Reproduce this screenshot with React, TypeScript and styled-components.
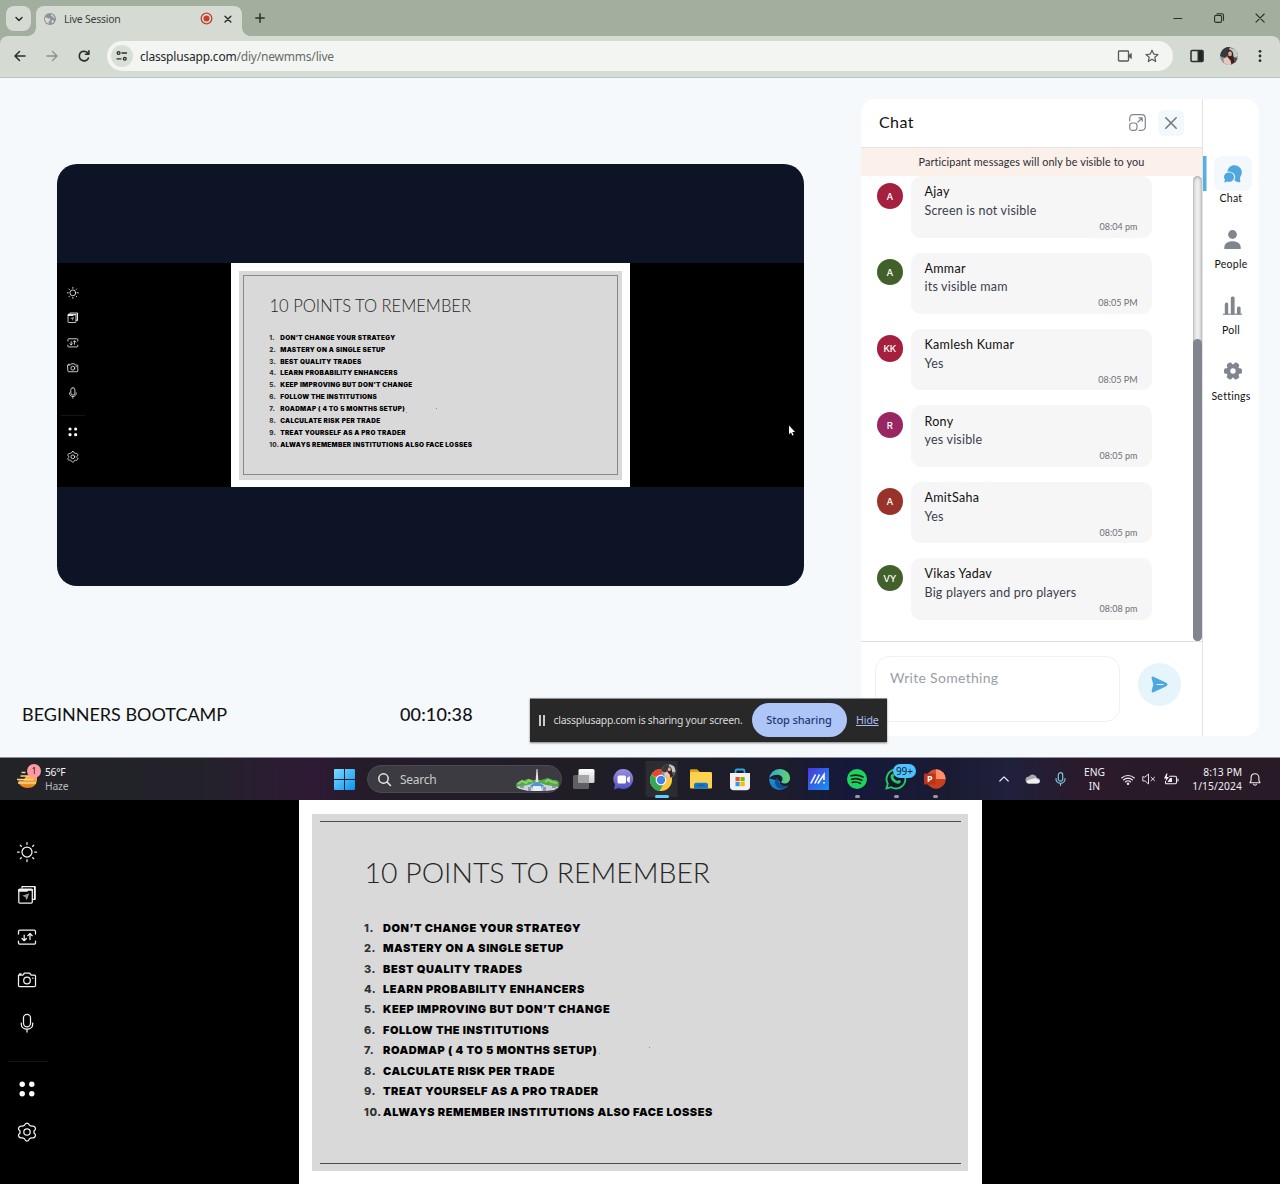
import React from 'react';
import styled, { createGlobalStyle, css } from 'styled-components';

const SYS = '"Noto Sans", "Open Sans", sans-serif';
const UI = 'Lato, "Noto Sans", sans-serif';

const Global = createGlobalStyle`
  * { box-sizing: border-box; }
  body { margin: 0; background: #f5f9fc; }
  svg { display: block; flex: none; overflow: visible; }
`;

const Page = styled.div`
  width: 1280px;
  height: 1184px;
  overflow: hidden;
  display: flex;
  flex-direction: column;
  position: relative;
  font-family: ${UI};
`;

/* A single line of text with its own size, colour and tracking. */
const Text = styled.span<{ $size: number; $color?: string; $track?: number; $weight?: number; $lh?: number; $sys?: boolean }>`
  display: block;
  white-space: pre;
  font-family: ${(p) => (p.$sys ? SYS : UI)};
  font-size: ${(p) => p.$size}px;
  line-height: ${(p) => p.$lh ?? 16}px;
  color: ${(p) => p.$color ?? '#111'};
  letter-spacing: ${(p) => p.$track ?? 0}px;
  font-weight: ${(p) => p.$weight ?? 400};
`;

/* ---------- browser chrome ---------- */

const TabStrip = styled.div`
  height: 36px;
  background: #a2ae9e;
  display: flex;
  align-items: flex-start;
  padding: 6px 0 0 6px;
`;
const TabSearch = styled.div`
  width: 25px;
  height: 25px;
  border-radius: 8px;
  background: #d5dbd2;
  display: flex;
  align-items: center;
  justify-content: center;
`;
const Tab = styled.div`
  position: relative;
  margin-left: 5px;
  width: 206px;
  height: 30px;
  border-radius: 8px 8px 0 0;
  background: #d5dbd2;
  display: flex;
  align-items: center;
  padding: 0 8px 5px 8px;
  &::before, &::after {
    content: '';
    position: absolute;
    bottom: 0;
    width: 8px;
    height: 8px;
  }
  &::before { left: -8px; background: radial-gradient(circle at 0 0, transparent 7.5px, #d5dbd2 8px); }
  &::after { right: -8px; background: radial-gradient(circle at 100% 0, transparent 7.5px, #d5dbd2 8px); }
`;
const TabTitle = styled.div` margin-left: 8px; flex: 1; `;
const TabTools = styled.div` display: flex; align-items: center; gap: 9px; `;
const NewTab = styled.div` margin: 7px 0 0 12.5px; `;
const WindowButtons = styled.div`
  margin-left: auto;
  margin-right: 15px;
  padding-top: 7px;
  display: flex;
  gap: 31px;
`;
const ToolbarBack = styled.div` background: #a2ae9e; `;
const Toolbar = styled.div`
  height: 42px;
  background: #d5dbd2;
  border-radius: 8px 8px 0 0;
  border-bottom: 1px solid #bcc5c5;
  display: flex;
  align-items: center;
  padding: 0 13px 1px 13px;
`;
const NavIcons = styled.div` display: flex; gap: 18px; width: 94px; `;
const AddressBar = styled.div`
  width: 1066px;
  height: 30px;
  border-radius: 15px;
  background: #f3f5f2;
  display: flex;
  align-items: center;
  padding: 0 14px 0 4px;
`;
const SiteInfo = styled.div`
  width: 22px;
  height: 22px;
  border-radius: 50%;
  background: #d9ded6;
  display: flex;
  align-items: center;
  justify-content: center;
  margin-right: 7px;
`;
const Url = styled.div`
  flex: 1;
  padding-top: 2px;
  font: 12px/16px ${SYS};
  letter-spacing: -0.2px;
  color: #23282a;
  span { color: #666c6a; }
`;
const AddressIcons = styled.div` display: flex; gap: 12.5px; align-items: center; `;
const ToolbarRight = styled.div` display: flex; align-items: center; margin-left: 16.5px; gap: 16.3px; `;

/* ---------- meeting page ---------- */

const Meeting = styled.main`
  height: 679px;
  background: #f5f9fc;
  display: flex;
  justify-content: space-between;
  padding: 21px 21px 0 0;
`;
const Stage = styled.section`
  width: 861px;
  padding: 65px 0 0 57px;
`;
const Video = styled.div`
  width: 747px;
  height: 422px;
  border-radius: 20px;
  overflow: hidden;
  background: #0c1426;
  padding-top: 99px;
`;
const Share = styled.div`
  height: 224px;
  background: #000;
  overflow: hidden;
  > div { margin-left: -0.3px; }
`;
const StageFooter = styled.div`
  display: flex;
  margin: 116px 0 0 -35px;
`;
const FooterName = styled.div` width: 378px; `;

const Panel = styled.aside`
  width: 398px;
  height: 637px;
  border-radius: 14px;
  background: #fff;
  display: flex;
`;
const ChatColumn = styled.div`
  width: 342px;
  border-right: 1px solid #dfe3e7;
  display: flex;
  flex-direction: column;
`;
const ChatHeader = styled.div`
  height: 49px;
  border-bottom: 1px solid #e3e5e7;
  display: flex;
  align-items: center;
  padding: 0 18px;
`;
const ChatTitle = styled.div` flex: 1; padding-bottom: 2px; `;
const PopOut = styled.div` padding: 0 0 2px; `;
const CloseButton = styled.div`
  width: 26px;
  height: 26px;
  margin-left: 12px;
  border-radius: 6px;
  background: #f3f8fc;
  display: flex;
  align-items: center;
  justify-content: center;
`;
const Banner = styled.div`
  height: 28px;
  background: #fbf0ea;
  display: flex;
  align-items: center;
  justify-content: center;
`;
const Scroller = styled.div`
  height: 465px;
  display: flex;
  justify-content: space-between;
  overflow: hidden;
`;
const Messages = styled.div`
  padding: 0.3px 0 0 15.5px;
  display: flex;
  flex-direction: column;
  gap: 15px;
`;
const Message = styled.div` display: flex; gap: 7.5px; `;
const Avatar = styled.div<{ $bg: string }>`
  width: 26.5px;
  height: 26.5px;
  margin-top: 6.3px;
  border-radius: 50%;
  background: ${(p) => p.$bg};
  color: #fff;
  font: 500 9.5px/27px Inter, sans-serif;
  letter-spacing: -0.2px;
  text-align: center;
`;
const Bubble = styled.div`
  width: 241px;
  height: 61.4px;
  border-radius: 10px;
  background: #f6f6f6;
  padding: 7.2px 14px 0;
`;
const Stamp = styled.div` display: flex; justify-content: flex-end; margin-top: -0.5px; `;
const Track = styled.div`
  width: 9px;
  height: 465px;
  border-radius: 5px;
  background: #f1f1f1;
  box-shadow: inset 0 0 4px rgba(0, 0, 0, 0.45);
  padding-top: 163px;
`;
const Thumb = styled.div` height: 302px; border-radius: 5px; background: #80858f; `;
const Composer = styled.div`
  flex: 1;
  border-top: 1px solid #d9e1e7;
  display: flex;
  padding: 14px 0 0 14px;
`;
const Input = styled.div`
  width: 245px;
  height: 66px;
  border: 1px solid #f0f1f3;
  border-radius: 14px;
  padding: 13px 14px;
`;
const Send = styled.div`
  width: 43px;
  height: 43px;
  margin: 7px 0 0 18px;
  border-radius: 50%;
  background: #e6f4fb;
  display: flex;
  align-items: center;
  justify-content: center;
`;

const SideNav = styled.nav`
  width: 56px;
  padding-top: 57px;
  display: flex;
  flex-direction: column;
`;
const NavItem = styled.div<{ $active?: boolean }>`
  height: 65.8px;
  display: flex;
  flex-direction: column;
  ${(p) => p.$active && css`
    background: linear-gradient(#57aee2, #57aee2) 0 0 / 3.5px 35px no-repeat;
  `}
`;
const NavIcon = styled.div<{ $active?: boolean }>`
  width: 37.5px;
  height: 35px;
  margin-left: 11px;
  border-radius: 8px;
  background: ${(p) => (p.$active ? '#f2f8fd' : 'transparent')};
  display: flex;
  align-items: center;
  justify-content: center;
`;
const NavLabel = styled.div` display: flex; justify-content: center; margin-top: -0.6px; `;

/* ---------- shared presentation ---------- */

const u = (n: number, k: number) => `${(n * k).toFixed(2)}px`;

const BoardRoot = styled.div<{ $k: number }>`
  width: ${(p) => u(1280, p.$k)};
  height: ${(p) => u(384, p.$k)};
  background: #000;
  display: flex;
`;
const Rail = styled.div<{ $k: number }>`
  width: ${(p) => u(299, p.$k)};
  padding-top: ${(p) => u(30.6, p.$k)};
`;
const RailCell = styled.div<{ $k: number }>`
  width: ${(p) => u(54, p.$k)};
  height: ${(p) => u(42.7, p.$k)};
  display: flex;
  align-items: center;
  justify-content: center;
`;
const RailRule = styled.div<{ $k: number }>`
  width: ${(p) => u(40, p.$k)};
  height: 1px;
  margin: ${(p) => `${u(16.6, p.$k)} 0 ${u(6.4, p.$k)} ${u(8, p.$k)}`};
  background: #141414;
`;
const Paper = styled.div<{ $k: number }>`
  width: ${(p) => u(683, p.$k)};
  background: #fff;
  padding: ${(p) => `${u(14, p.$k)} ${u(14, p.$k)} ${u(13, p.$k)} ${u(13, p.$k)}`};
`;
const Sheet = styled.div<{ $k: number }>`
  height: 100%;
  background: #d9d9d9;
  padding: ${(p) => `${u(7, p.$k)} ${u(7, p.$k)} ${u(7, p.$k)} ${u(8, p.$k)}`};
`;
const Frame = styled.div<{ $k: number; $boxed?: boolean }>`
  height: 100%;
  border: solid ${(p) => (p.$boxed ? '#8a8a8a' : '#4c4c4c')};
  border-width: ${(p) => (p.$boxed ? '1px' : '1px 0')};
  padding: ${(p) => `${u(31.3, p.$k)} 0 0 ${u(p.$boxed ? 42.3 : 44, p.$k)}`};
`;
const SlideTitle = styled.div<{ $k: number }>`
  padding-left: ${(p) => u(0.6, p.$k)};
  font-family: Lato, sans-serif;
  font-weight: 300;
  font-size: ${(p) => u(28.4, p.$k)};
  line-height: ${(p) => u(38, p.$k)};
  color: #262626;
  white-space: pre;
`;
const Points = styled.div<{ $k: number }>` padding-top: ${(p) => u(p.$k < 1 ? 27.4 : 26.4, p.$k)}; `;
const Point = styled.div<{ $k: number }>`
  height: ${(p) => u(20.45, p.$k)};
  display: flex;
  font-family: Inter, sans-serif;
  font-weight: 900;
  font-size: ${(p) => u(11, p.$k)};
  line-height: ${(p) => u(20.45, p.$k)};
  letter-spacing: ${(p) => u(0.53, p.$k)};
  color: #000;
  white-space: pre;
`;
const PointNo = styled.span<{ $k: number }>`
  width: ${(p) => u(19, p.$k)};
  font-weight: 800;
  color: #303030;
`;
const Speck = styled.i<{ $k: number; $gap: number; $drop: number }>`
  width: 1px;
  height: 1px;
  margin: ${(p) => `${u(p.$drop, p.$k)} 0 0 ${u(p.$gap, p.$k)}`};
  background: #a08888;
`;

/* ---------- taskbar ---------- */

const Taskbar = styled.div`
  height: 43px;
  border-top: 1px solid #8d8f9c;
  background: linear-gradient(90deg, #222327 0, #23222b 200px, #2e1a35 310px, #241c29 370px, #1f1d26 600px, #1d1d2c 780px, #15183b 850px, #1a1b33 950px, #20203c 1010px, #2a1a2b 1080px, #281a26 1280px);
  display: flex;
  align-items: center;
`;
const Weather = styled.div` width: 334px; padding-left: 17px; display: flex; gap: 5px; align-items: center; `;
const WeatherIcon = styled.div` position: relative; width: 23px; height: 28px; padding-top: 3px; `;
const Badge = styled.div`
  position: absolute;
  left: 10px;
  top: -1px;
  width: 14px;
  height: 14px;
  border-radius: 50%;
  background: #ff99a4;
  color: #222;
  font: 9px/14px ${SYS};
  text-align: center;
`;
const SearchBox = styled.div`
  width: 195px;
  height: 28px;
  margin: 0 2.5px 0 12px;
  border-radius: 14px;
  border: 1px solid #4b4a51;
  background: #3c3b42;
  display: flex;
  align-items: center;
  gap: 9px;
  padding-left: 10px;
`;
const SearchLabel = styled.div` flex: 1; padding-top: 1px; `;
const Apps = styled.div` display: flex; `;
const AppCell = styled.div<{ $mark?: string; $wide?: boolean; $hot?: boolean }>`
  position: relative;
  width: 39.05px;
  height: 36px;
  display: flex;
  align-items: center;
  justify-content: center;
  ${(p) => p.$hot && css`
    border-radius: 5px;
    background: linear-gradient(90deg, transparent 2px, #2c2c33 3px, #2c2c33 34px, transparent 35px);
  `}
  &::after {
    content: '';
    position: absolute;
    bottom: -1px;
    width: ${(p) => (p.$wide ? 14 : 5)}px;
    height: 3px;
    border-radius: 2px;
    background: ${(p) => p.$mark ?? 'transparent'};
  }
`;
const CountBadge = styled.div`
  position: absolute;
  left: 16px;
  top: 3px;
  width: 23px;
  height: 14px;
  border-radius: 7px;
  background: #4cc2ff;
  color: #10222e;
  font: 10px/14px ${SYS};
  letter-spacing: -0.2px;
  text-align: center;
`;
const Tray = styled.div` margin-left: auto; display: flex; align-items: center; padding-right: 12px; `;
const TrayItem = styled.div<{ $w: number; $end?: boolean }>`
  width: ${(p) => p.$w}px;
  display: flex;
  flex-direction: column;
  align-items: ${(p) => (p.$end ? 'flex-end' : 'center')};
`;

/* ---------- overlays ---------- */

const ShareBar = styled.div`
  position: absolute;
  left: 530px;
  top: 698px;
  width: 357px;
  height: 44px;
  background: #282828;
  border-top: 1px solid #8d8f91;
  box-shadow: 0 1px 2px rgba(0, 0, 0, 0.5);
  display: flex;
  align-items: center;
  padding: 0 0 1px 9px;
`;
const ShareText = styled.div` width: 198.5px; margin-left: 8.5px; `;
const StopButton = styled.div`
  width: 95px;
  height: 34px;
  border-radius: 17px;
  background: #aec5f8;
  display: flex;
  align-items: center;
  justify-content: center;
  padding-right: 1px;
  margin-right: 9px;
`;
const HideLink = styled.span`
  font: 10.6px/14px ${SYS};
  letter-spacing: -0.1px;
  color: #a9bdf0;
  text-decoration: underline;
`;
const Pointer = styled.svg` position: absolute; left: 788px; top: 425px; `;

/* ---------- drawings ---------- */

type IconProps = { s?: number; c?: string; w?: number; children: React.ReactNode; box?: string; h?: number; fill?: string };
const Svg = ({ s = 16, h, c = '#2b2f2c', w = 1.5, box, fill = 'none', children }: IconProps) => (
  <svg width={s} height={h ?? s} viewBox={box ?? `0 0 ${s} ${h ?? s}`} fill={fill} stroke={c} strokeWidth={w} strokeLinecap="round" strokeLinejoin="round">{children}</svg>
);

function RailIcon({ name, k }: { name: string; k: number }) {
  const size = 20 * k;
  const w = k < 1 ? 1.4 : 1.25;
  return (
    <Svg s={size} box="0 0 20 20" c="#f2f2f2" w={w}>
      {name === 'sun' && <><circle cx="10" cy="10" r="5" /><path d="M10 .5v1.800M10 17.700v1.800M.5 10h1.800M17.700 10h1.800M3.300 3.300l1 1M15.700 15.700l1 1M3.300 16.700l1-1M15.700 4.300l1-1" /></>}
      {name === 'pages' && <><path d="M5 3V1.700h12.800v12.600h-2" /><rect x="1.800" y="4" width="13.500" height="14" rx="1" /><path d="M2 4.800h13.200M2 5.800h8" strokeWidth="1.800" /><path d="M12.300 8.300l-2.500 7-1.500-3.200-3.100-1.300z" fill="#999" stroke="none" /><path d="M17.800 2v12" strokeWidth="1.800" /></>}
      {name === 'swap' && <><path d="M1.500 7V4.500c0-1 .5-1.500 1.500-1.500h14c1 0 1.500.5 1.500 1.500V7M1.500 14v2c0 .700.300 1 1 1h15c.700 0 1-.300 1-1v-2" /><path d="M7.200 8v5.500M5 11.500l2.200 2.200 2.200-2.200M13 12.500V6.800M10.800 8.700L13 6.500l2.200 2.200" /></>}
      {name === 'camera' && <><path d="M1.500 5.200h4.300L7.500 3h5l1.700 2.200h3.300c.7 0 1 .4 1 1v9.300c0 .8-.4 1.200-1.200 1.200H2.700c-.8 0-1.200-.4-1.200-1.200zM2.500 3.800h1.500" /><circle cx="10" cy="10.500" r="3.300" /><path d="M15.500 8h.5" /></>}
      {name === 'mic' && <><rect x="6.500" y="1.300" width="7" height="12.500" rx="3.500" /><path d="M4.300 10v1.200c0 3 2.600 5 5.700 5s5.700-2 5.700-5V10M10 16.400v2.700" /></>}
      {name === 'dots' && <g fill="#fff" stroke="none"><circle cx="5.200" cy="5.200" r="2.700" /><circle cx="14.800" cy="5.200" r="2.700" /><circle cx="5.200" cy="14.800" r="2.700" /><circle cx="14.800" cy="14.800" r="2.700" /></g>}
      {name === 'gear' && <><path d="M10 1c1.300 0 2 .5 2.500 2.300 1.300.9 1.700 1.100 3 .8 1.700-.3 2.600.9 3 2.200.4 1.300-.9 2-1.500 2.700v2c.6.700 1.900 1.400 1.500 2.700-.4 1.300-1.300 2.500-3 2.200-1.300-.3-1.700-.1-3 .8C12 18.500 11.300 19 10 19s-2-.5-2.500-2.300c-1.300-.9-1.700-1.100-3-.8-1.700.3-2.600-.9-3-2.200C1.100 12.400 2.400 11.700 3 11V9c-.6-.7-1.900-1.400-1.500-2.700.4-1.300 1.300-2.500 3-2.200 1.300.3 1.700.1 3-.8C8 1.500 8.700 1 10 1z" /><circle cx="10" cy="10" r="3.200" /></>}
    </Svg>
  );
}

const POINTS = [
  'DON’T CHANGE YOUR STRATEGY',
  'MASTERY ON A SINGLE SETUP',
  'BEST QUALITY TRADES',
  'LEARN PROBABILITY ENHANCERS',
  'KEEP IMPROVING BUT DON’T CHANGE',
  'FOLLOW THE INSTITUTIONS',
  'ROADMAP ( 4 TO 5 MONTHS SETUP)',
  'CALCULATE RISK PER TRADE',
  'TREAT YOURSELF AS A PRO TRADER',
  'ALWAYS REMEMBER INSTITUTIONS ALSO FACE LOSSES',
];
const MARKED = 6;

function Board({ k, boxed }: { k: number; boxed?: boolean }) {
  return (
    <BoardRoot $k={k}>
      <Rail $k={k}>
        {['sun', 'pages', 'swap', 'camera', 'mic'].map((n) => <RailCell $k={k} key={n}><RailIcon name={n} k={k} /></RailCell>)}
        <RailRule $k={k} />
        {['dots', 'gear'].map((n) => <RailCell $k={k} key={n}><RailIcon name={n} k={k} /></RailCell>)}
      </Rail>
      <Paper $k={k}>
        <Sheet $k={k}>
          <Frame $k={k} $boxed={boxed}>
            <SlideTitle $k={k}>10 POINTS TO REMEMBER</SlideTitle>
            <Points $k={k}>
              {POINTS.map((t, i) => (
                <Point $k={k} key={t}>
                  <PointNo $k={k}>{i + 1}.</PointNo>{t}
                  {i === MARKED && <><Speck $k={k} $gap={2} $drop={13} /><Speck $k={k} $gap={49} $drop={7} /></>}
                </Point>
              ))}
            </Points>
          </Frame>
        </Sheet>
      </Paper>
    </BoardRoot>
  );
}

const CHAT = [
  { name: 'Ajay', text: 'Screen is not visible', time: '08:04 pm', tag: 'A', bg: '#a5203f' },
  { name: 'Ammar', text: 'its visible mam', time: '08:05 PM', tag: 'A', bg: '#42602a' },
  { name: 'Kamlesh Kumar', text: 'Yes', time: '08:05 PM', tag: 'KK', bg: '#a5203f' },
  { name: 'Rony', text: 'yes visible', time: '08:05 pm', tag: 'R', bg: '#992663' },
  { name: 'AmitSaha', text: 'Yes', time: '08:05 pm', tag: 'A', bg: '#97332a' },
  { name: 'Vikas Yadav', text: 'Big players and pro players', time: '08:08 pm', tag: 'VY', bg: '#42602a' },
];

const G = '#80858f';
const TEETH = [0, 60, 120, 180, 240, 300];
const NAV = [
  { label: 'Chat', icon: <svg width="18" height="18" viewBox="0 0 18 18" fill="#4ea7df"><path d="M10.200.3c4.200 0 7.600 3 7.600 6.900 0 2.100-.8 3.800-1.800 5.200l.3 4.300c0 .5-.3.700-.7.600-2.500-.3-4.300-1-5.300-2.100.6-.9.9-1.900.9-3 0-3.300-2.900-5.700-7.900-5.600C4 3 6.800.3 10.200.3z" /><path d="M5 7.500c2.800 0 5 2 5 4.700s-2.200 4.700-5 4.700c-.6 0-1.200-.1-1.700-.3L.8 17.400c-.3.100-.5-.1-.4-.4l.5-2.400C.4 13.900 0 13.100 0 12.200 0 9.500 2.200 7.500 5 7.500z" /></svg> },
  { label: 'People', icon: <svg width="17" height="19" viewBox="0 0 17 19" fill={G}><circle cx="8.500" cy="4.500" r="4.400" /><path d="M.3 19v-1.500C.3 13.500 4 11.300 8.500 11.300s8.200 2.200 8.200 6.200V19z" /></svg> },
  { label: 'Poll', icon: <svg width="19" height="19" viewBox="0 0 19 19" fill={G}><path d="M0 17.600h19v1.200H0z" /><rect x="1.800" y="6.500" width="3.400" height="12" rx="1.500" /><rect x="7.800" y=".5" width="3.800" height="18" rx="1.500" /><rect x="14" y="10.500" width="3.600" height="8" rx="1.500" /></svg> },
  { label: 'Settings', icon: <svg width="18" height="18" viewBox="0 0 18 18" fill={G}><circle cx="9" cy="9" r="6.700" />{TEETH.map((a) => <rect key={a} x="6.200" y="0" width="5.600" height="5" rx="1.900" transform={`rotate(${a + 30} 9 9)`} />)}<circle cx="9" cy="9" r="2.700" fill="#fff" /></svg> },
];

const PhotoHead = ({ s }: { s: number }) => (
  <svg width={s} height={s} viewBox="0 0 18 18">
    <circle cx="9" cy="9" r="9" fill="#8f9795" />
    <path d="M1 5.500A9 9 0 0110 0v6L5 11 0 9z" fill="#343a3a" />
    <path d="M9 1l7 2 2 6-5 2z" fill="#c5cbca" />
    <path d="M8 3.500c3-1.500 5.500 1 5.300 5L15 15l-4 2.700-4-3z" fill="#3b211e" />
    <ellipse cx="10" cy="6.800" rx="1.900" ry="2.500" fill="#e0aa96" />
    <path d="M3.500 11.500l4-1.500 3 3.500 1 4.300-3 .2-4.500-2z" fill="#e8c4bd" />
    <path d="M14 10l3.500 1.500L15 16z" fill="#554b4b" />
  </svg>
);

const APPS: { id: string; mark?: string; wide?: boolean; hot?: boolean; art: React.ReactNode }[] = [
  { id: 'tasks', art: <svg width="22" height="20" viewBox="0 0 22 20"><defs><linearGradient id="tw" x2="0" y2="1"><stop stopColor="#fff" /><stop offset="1" stopColor="#cfcfcf" /></linearGradient></defs><rect x="0" y="6" width="16" height="14" rx="1.500" fill="#5f5f63" /><rect x="5.500" y="0" width="16" height="14" rx="1.500" fill="url(#tw)" /><rect x="5.500" y="6" width="10.500" height="8" fill="#a6a6a8" /></svg> },
  { id: 'chat', art: <svg width="21" height="21" viewBox="0 0 21 21"><defs><linearGradient id="tc" x2="0" y2="1"><stop stopColor="#9a91dc" /><stop offset="1" stopColor="#4f50c4" /></linearGradient></defs><path d="M10.500 0a10 10 0 11-4.600 19L1 20.500l1-5A10 10 0 0110.500 0z" fill="url(#tc)" /><rect x="4.500" y="6.500" width="8.500" height="8" rx="1.500" fill="#fff" /><path d="M14 9l2.800-2v7L14 12z" fill="#fff" /></svg> },
  { id: 'chrome', mark: '#60cdff', wide: true, hot: true, art: <svg width="28" height="28" viewBox="0 0 28 28"><circle cx="13" cy="15" r="11" fill="#fcc934" /><path d="M13 15L3.500 9.500a11 11 0 0119 0z" fill="#ea4335" /><path d="M3.500 9.500a11 11 0 007.900 16.400L17 17l-6 1z" fill="#34a853" /><path d="M3.500 9.500L8.500 17.500h5z" fill="#34a853" /><circle cx="13" cy="15" r="5.400" fill="#fff" /><circle cx="13" cy="15" r="4.200" fill="#3f83ec" /><g transform="translate(13.500 -1)"><PhotoHead s={14} /></g></svg> },
  { id: 'files', art: <svg width="22" height="20" viewBox="0 0 22 20"><path d="M0 1.500C0 .7.500.3 1.300.3H7l2.500 2.200V5H0z" fill="#e0a01c" /><path d="M0 4.500c0-1 .5-1.500 1.500-1.500h19c1 0 1.500.5 1.500 1.500V18c0 1-.5 1.500-1.500 1.500h-19C.5 19.500 0 19 0 18z" fill="#ffd150" /><path d="M4 16c0-1.500.8-2.300 2.200-2.300h9.600c1.400 0 2.200.8 2.200 2.300v3.500H4z" fill="#1779c4" /><path d="M7.500 16.300h7" stroke="#0e5b9c" /></svg> },
  { id: 'store', art: <svg width="22" height="23" viewBox="0 0 22 23"><path d="M6.500 5V3c0-1 .5-1.500 1.500-1.500h6c1 0 1.500.5 1.500 1.500v2" stroke="#2fa8e6" strokeWidth="1.800" fill="none" /><path d="M1 5h20v13.500c0 2.500-1.200 3.800-3.800 3.800H4.800C2.200 22.300 1 21 1 18.500z" fill="#f1f1f3" /><path fill="#f25022" d="M6.500 9h4.200v4.200H6.500z" /><path fill="#7fba00" d="M11.500 9h4.200v4.200h-4.200z" /><path fill="#2a9fe5" d="M6.500 14h4.200v4.200H6.500z" /><path fill="#ffb900" d="M11.500 14h4.200v4.200h-4.200z" /></svg> },
  { id: 'edge', art: <svg width="21" height="21" viewBox="0 0 21 21"><defs><linearGradient id="eg"><stop stopColor="#2aa9d8" /><stop offset="1" stopColor="#62d46c" /></linearGradient><linearGradient id="eb" x2="1" y2="1"><stop stopColor="#1d94dc" /><stop offset="1" stopColor="#1766b4" /></linearGradient></defs><path d="M.2 9.500C0 16 4.500 20.900 10.500 20.900c4 0 7-1.800 8.800-4.300-2.500 1-6 .6-7.800-1.300-.9-1-1-2.200-.7-3.300z" fill="url(#eb)" /><path d="M.2 9.500A10.400 10.400 0 0110.500.1C16.500.1 21 4.500 21 9c0 4-2.800 5.600-5.600 5.600-2 0-3.200-.8-3.200-1.500 0-.8 1.300-1 1.300-3 0-2.400-2-4.300-5.200-4.300C4.800 5.800 1.500 7.200.2 9.500z" fill="url(#eg)" /><path d="M8.500 8.500c-2 1.200-3 3.700-2.200 6.500 1 3.300 4 5 7 4.600 2.500-.4 4.800-1.700 6-3-2.500 1-6 .6-8.300-1.300-1.600-1.400-2-4-2.500-6.800z" fill="#0f4d92" /></svg> },
  { id: 'myasus', art: <svg width="21" height="22" viewBox="0 0 21 22"><defs><linearGradient id="ma" x2="1" y2="1"><stop stopColor="#4d35dd" /><stop offset="1" stopColor="#1593f5" /></linearGradient></defs><rect width="21" height="22" fill="url(#ma)" /><path d="M2.800 15.500L7.500 6.500M6.800 15.500l4.700-9M9.800 15.500l6.200-9v5.500M16 14v1.500" stroke="#fff" strokeWidth="1.600" fill="none" /></svg> },
  { id: 'spotify', mark: '#9a9aa3', art: <svg width="20" height="20" viewBox="0 0 20 20"><circle cx="10" cy="10" r="10" fill="#1fd15f" /><path d="M4 6.800c4.500-1.200 8.500-.8 12 1.200M4.700 10.200c3.800-1 7-.6 10 1.100M5.300 13.400c3-.8 5.700-.4 8.200 1" stroke="#12271a" strokeWidth="1.700" fill="none" strokeLinecap="round" /></svg> },
  { id: 'whatsapp', mark: '#9a9aa3', art: <><svg width="22" height="22" viewBox="0 0 22 22"><path d="M1.500 20.500l1.300-4.800a9.400 9.400 0 113.500 3.500z" fill="#15182c" stroke="#27c768" strokeWidth="1.900" /><path d="M7.500 5.800c.8-.3 1 .2 1.600 1.800.3.800-1 1.300-.6 2 .9 1.500 2 2.600 3.700 3.300.7.300 1.100-1.200 1.800-.9 1.700.8 2 .9 1.800 1.700-.4 1.700-2.300 2.300-4 1.800-3.200-1-5.600-3.300-6.200-6-.3-1.700.7-3.300 1.900-3.700z" fill="#27c768" /></svg><CountBadge>99+</CountBadge></> },
  { id: 'powerpoint', mark: '#9a9aa3', art: <svg width="22" height="20" viewBox="0 0 22 20"><circle cx="12" cy="10" r="9.700" fill="#d35230" /><path d="M12 .3V10h9.700A9.700 9.700 0 0012 .3z" fill="#ff8f6b" /><path d="M2.300 10h19.400A9.700 9.700 0 0112 19.700 9.700 9.700 0 012.300 10z" fill="#c13b1b" opacity=".75" /><rect x="0" y="4.500" width="11.500" height="11" rx="1" fill="#bf3315" /><text x="3" y="13.300" fontSize="9" fontWeight="700" fontFamily="Noto Sans, sans-serif" fill="#fff">P</text></svg> },
];

export default function App() {
  return (
    <Page>
      <Global />
      <TabStrip>
        <TabSearch><Svg s={8} w={1.5}><path d="M1 2.500l3 3 3-3" /></Svg></TabSearch>
        <Tab>
          <svg width="12" height="12" viewBox="0 0 12 12"><circle cx="6" cy="6" r="6" fill="#8d949a" /><path d="M1 4.500C3 4 4 5.500 5.500 5.500 7 6 6 8 5 8.200c-.5 1 0 2-.5 2.500C2 10 .5 7.500 1 4.500zM7 1.200c-.5 1.300.3 1.800 1.300 2 .2 1.300 1.700 1 2.500 2.300C10.500 3.500 9 1.700 7 1.200zM7.500 7.500c1-.5 2 0 2.700.5-.5 1.200-1.500 2-2.500 2.300z" fill="#d5dbd2" /></svg>
          <TabTitle><Text $sys $size={10.5} $track={-0.25} $color="#3b403d">Live Session</Text></TabTitle>
          <TabTools>
            <svg width="13" height="13" viewBox="0 0 13 13"><circle cx="6.500" cy="6.500" r="5.300" fill="none" stroke="#c2402f" strokeWidth="1.300" /><circle cx="6.500" cy="6.500" r="3" fill="#c2402f" /></svg>
            <Svg s={12}><path d="M3 3.200l5.800 5.800M8.800 3.200L3 9" /></Svg>
          </TabTools>
        </Tab>
        <NewTab><Svg s={10}><path d="M5 .8v8.400M.8 5h8.400" /></Svg></NewTab>
        <WindowButtons>
          <Svg s={10} w={1.1}><path d="M.8 5.500h8" /></Svg>
          <Svg s={10} w={1.1}><rect x=".6" y="2.400" width="7" height="7" rx="1.500" /><path d="M3 .7h4.800c1 0 1.700.7 1.700 1.700v4.800" /></Svg>
          <Svg s={10} w={1.1}><path d="M1 1l8.200 8.200M9.200 1L1 9.200" /></Svg>
        </WindowButtons>
      </TabStrip>
      <ToolbarBack>
        <Toolbar>
          <NavIcons>
            <Svg s={14} w={1.5}><path d="M12 7H2.500M6.500 2.500L2 7l4.500 4.500" /></Svg>
            <Svg s={14} w={1.3} c="#8b918a"><path d="M2 7h9.500M7.500 2.500L12 7l-4.500 4.500" /></Svg>
            <Svg s={14} w={1.6}><path d="M11.500 9A4.800 4.800 0 117 2.200c2 0 3.400 1 4.300 2.600M11.900 1.800v3.400H8.500" /></Svg>
          </NavIcons>
          <AddressBar>
            <SiteInfo><Svg s={12} w={1.3}><circle cx="2.600" cy="3" r="1.400" /><path d="M6 3h4.500M1 8.800h4" /><circle cx="8.800" cy="8.800" r="1.400" /></Svg></SiteInfo>
            <Url>classplusapp.com<span>/diy/newmms/live</span></Url>
            <AddressIcons>
              <Svg s={16} w={1.3} c="#565b58"><rect x="1.500" y="3" width="10" height="10" rx=".8" /><path d="M12 7l2.500-1.800v5.600L12 9z" fill="#565b58" strokeWidth=".5" /></Svg>
              <Svg s={14} w={1.2} c="#565b58"><path d="M7 1.200l1.700 3.900 4.300.4-3.200 2.800.9 4.200L7 10.300l-3.700 2.200.9-4.200L1 5.500l4.300-.4z" /></Svg>
            </AddressIcons>
          </AddressBar>
          <ToolbarRight>
            <Svg s={14} w={1.500}><rect x="1" y="1.500" width="12" height="11" rx="1" /><path d="M8.300 2h4.200v10H8.300z" fill="#20242a" /></Svg>
            <PhotoHead s={18} />
            <svg width="12" height="14" viewBox="0 0 12 14" fill="#2b2f2c"><circle cx="6" cy="2.300" r="1.400" /><circle cx="6" cy="7" r="1.400" /><circle cx="6" cy="11.700" r="1.400" /></svg>
          </ToolbarRight>
        </Toolbar>
      </ToolbarBack>

      <Meeting>
        <Stage>
          <Video><Share><Board k={0.5836} boxed /></Share></Video>
          <StageFooter>
            <FooterName><Text $size={18} $lh={24}>BEGINNERS BOOTCAMP</Text></FooterName>
            <Text $size={18} $lh={24} $track={0.13} $weight={500}>00:10:38</Text>
          </StageFooter>
        </Stage>
        <Panel>
          <ChatColumn>
            <ChatHeader>
              <ChatTitle><Text $size={16} $lh={20} $track={0.4}>Chat</Text></ChatTitle>
              <PopOut><Svg s={17} w={1.2} c={G}><path d="M.7 7V4.500C.7 2 2 .7 4.500.7h8c2.500 0 3.800 1.300 3.800 3.800v8c0 2.500-1.300 3.800-3.800 3.800H10" /><rect x=".7" y="9" width="7.300" height="7.300" rx="2.500" /><path d="M9 8l4-4M9.800 3.800h3.400v3.400" /></Svg></PopOut>
              <CloseButton><Svg s={12} w={1.600} c="#737985"><path d="M.8.8l10.400 10.400M11.200.8L.8 11.200" /></Svg></CloseButton>
            </ChatHeader>
            <Banner><Text $size={10.8} $track={0.12} $color="#2c2c34">Participant messages will only be visible to you</Text></Banner>
            <Scroller>
              <Messages>
                {CHAT.map((m, i) => (
                  <Message key={i}>
                    <Avatar $bg={m.bg}>{m.tag}</Avatar>
                    <Bubble>
                      <Text $size={12.5} $lh={18.5} $track={0.3} $color="#111">{m.name}</Text>
                      <Text $size={12.5} $lh={18.5} $track={0.2} $color="#3a3f4d">{m.text}</Text>
                      <Stamp><Text $size={9} $lh={13} $color="#6d6f75">{m.time}</Text></Stamp>
                    </Bubble>
                  </Message>
                ))}
              </Messages>
              <Track><Thumb /></Track>
            </Scroller>
            <Composer>
              <Input><Text $size={14} $track={0.3} $color="#9a9ea8">Write Something</Text></Input>
              <Send>
                <svg width="17" height="17" viewBox="0 0 17 17"><path d="M2.500.8l12.700 6c1.700.8 1.700 2.600 0 3.400l-12.700 6C1.200 16.800.3 16 .7 14.600L2.300 8.500.7 2.400C.3 1 1.200.2 2.500.8z" fill="#4ea7df" /><path d="M6 8.500h6" stroke="#e6f4fb" strokeWidth="1.200" strokeLinecap="round" /></svg>
              </Send>
            </Composer>
          </ChatColumn>
          <SideNav>
            {NAV.map((n, i) => (
              <NavItem key={n.label} $active={i === 0}>
                <NavIcon $active={i === 0}>{n.icon}</NavIcon>
                <NavLabel><Text $size={10.500} $track={0.25}>{n.label}</Text></NavLabel>
              </NavItem>
            ))}
          </SideNav>
        </Panel>
      </Meeting>

      <Taskbar>
        <Weather>
          <WeatherIcon>
            <svg width="22" height="22" viewBox="0 0 22 22"><defs><linearGradient id="sun" x2="0" y2="1"><stop stopColor="#ffc348" /><stop offset="1" stopColor="#e57a18" /></linearGradient></defs><path d="M1.500 12.500h5L9 8l11-1v4.500c0 5-4 8.500-9.200 8.500-4.500 0-8-2.500-9.300-5.500z" fill="url(#sun)" /><path d="M4.500 4.500h4M3.500 8h10M0 11.500h16M1 15h18" stroke="#f6d48b" strokeWidth="1.500" /></svg>
            <Badge>1</Badge>
          </WeatherIcon>
          <div>
            <Text $sys $size={10.300} $lh={14.500} $track={-0.3} $color="#f5f5f5">56°F</Text>
            <Text $sys $size={10.300} $lh={14.500} $track={-0.2} $color="#b9b9bd">Haze</Text>
          </div>
        </Weather>
        <svg width="21" height="21" viewBox="0 0 21 21"><defs><linearGradient id="win" x2="1" y2="1"><stop stopColor="#7bdcff" /><stop offset="1" stopColor="#0b93ef" /></linearGradient></defs><path d="M0 1Q0 0 1 0h9v10H0zM11 0h9q1 0 1 1v9H11zM0 11h10v10H1q-1 0-1-1zM11 11h10v9q0 1-1 1h-9z" fill="url(#win)" /></svg>
        <SearchBox>
          <Svg s={13} w={1.500} c="#e8e8ea"><circle cx="5.500" cy="5.500" r="4.700" /><path d="M9 9l3.500 3.500" /></Svg>
          <SearchLabel><Text $sys $size={12} $track={-0.25} $color="#c9c9ce">Search</Text></SearchLabel>
          <svg width="46" height="23" viewBox="0 0 46 23"><path d="M1 18c0-4 3-5 7-5l4-2 7 1h7l7-2 5 2c5 0 7 2 6 5l-2 3-38 1z" fill="#55a84a" /><path d="M3 16l4-3 4 2 3-3 3 2M30 14l3-2 4 2 5 1" stroke="#8bd06a" strokeWidth="2" fill="none" /><path d="M1 19l12-2 9-3 9 3 13 2-5 3-8 1H13l-8-2z" fill="#cdd3e0" /><path d="M15 17.500l7-4 7 4-2 2H17z" fill="#4f94d8" /><path d="M20.500 14l1-13h1l1 13z" fill="#f0dcdc" /><path d="M13 19h3v4h-3zM28 19h3v4h-3zM5 18h4v2H5zM37 18h4v2h-4z" fill="#8e96ac" /><path d="M18 18h8v5h-8z" fill="#e9edf5" /></svg>
        </SearchBox>
        <Apps>
          {APPS.map((a) => <AppCell key={a.id} $mark={a.mark} $wide={a.wide} $hot={a.hot}>{a.art}</AppCell>)}
        </Apps>
        <Tray>
          <TrayItem $w={28}><Svg s={10} h={6} c="#e8e8ea" w={1.200}><path d="M.8 5L5 .8 9.200 5" /></Svg></TrayItem>
          <TrayItem $w={29}><svg width="15" height="10" viewBox="0 0 15 10"><path d="M4 9.500a3.500 3.500 0 010-7A4.500 4.500 0 0112 4c4 0 4 5.500 0 5.500z" fill="#a9a9ae" /><path d="M3 9.500c-2-1-1-3.500 1-3.700L9 4.500c1.500-.5 3 0 3.500 1C15.500 5.500 15.500 9.500 12 9.500z" fill="#efeff1" /></svg></TrayItem>
          <TrayItem $w={28}><Svg s={11} h={14} c="#7cc4d8" w={1.200}><rect x="3.300" y=".7" width="4.400" height="8.500" rx="2.200" /><path d="M1 6.500v.8c0 2.300 2 4 4.500 4s4.500-1.700 4.500-4v-.8M5.500 11.400v2" /></Svg></TrayItem>
          <TrayItem $w={40}>
            <Text $sys $size={10.300} $lh={14.500} $track={0} $color="#f0f0f2">ENG</Text>
            <Text $sys $size={10.300} $lh={14.500} $color="#f0f0f2">IN</Text>
          </TrayItem>
          <TrayItem $w={27}><Svg s={14} h={11} c="#ededf0" w={1.100}><path d="M.7 4A9 9 0 0113.300 4M2.500 6a6.400 6.400 0 019 0M4.400 8a3.700 3.700 0 015.200 0" /><circle cx="7" cy="9.700" r=".7" fill="#fff" /></Svg></TrayItem>
          <TrayItem $w={15}><Svg s={14} h={12} c="#dcdce0" w={1}><path d="M.8 4v4h2.400L6.500 11V1L3.200 4zM9 4.200l3.600 3.600M12.600 4.200L9 7.800" /></Svg></TrayItem>
          <TrayItem $w={28.5}><Svg s={16} h={11} c="#ededf0" w={1.100}><path d="M6.500 2.200h5.800c.8 0 1.200.4 1.200 1.200v5.200c0 .8-.4 1.200-1.200 1.200H3.700c-.8 0-1.200-.4-1.200-1.200V7.500M15 5v2" /><path d="M7 4h2v4H4.500z" fill="#ededf0" stroke="none" /><path d="M3.500-.5L1 4.500h2.200L2.500 7.500 6 3H3.700L4.500-.5z" fill="#fff" stroke="none" /></Svg></TrayItem>
          <TrayItem $w={57} $end>
            <Text $sys $size={10.300} $lh={14.500} $track={0} $color="#f0f0f2">8:13 PM</Text>
            <Text $sys $size={10.300} $lh={14.500} $track={0.1} $color="#f0f0f2">1/15/2024</Text>
          </TrayItem>
          <TrayItem $w={26}><Svg s={12} h={13} c="#ededf0" w={1.100}><path d="M6 .7c2.300 0 3.900 1.700 3.900 3.900v3L11 9.800H1L2.100 7.600v-3C2.100 2.400 3.700.7 6 .7zM4.500 11.200c.4 1.300 2.600 1.300 3 0" /></Svg></TrayItem>
        </Tray>
      </Taskbar>

      <Board k={1} />

      <Pointer width="8" height="12" viewBox="0 0 8 12"><path d="M1 .5v8.700l2-1.700 1.300 3 1.300-.6-1.300-2.800H7z" fill="#fff" /></Pointer>
      <ShareBar>
        <svg width="6" height="11" viewBox="0 0 6 11" fill="#c9cacc"><path d="M0 0h2v11H0zM4 0h2v11H4z" /></svg>
        <ShareText><Text $sys $size={10.400} $track={-0.25} $color="#dcdcdc">classplusapp.com is sharing your screen.</Text></ShareText>
        <StopButton><Text $sys $size={11} $weight={500} $track={-0.1} $color="#1f3a73">Stop sharing</Text></StopButton>
        <HideLink>Hide</HideLink>
      </ShareBar>
    </Page>
  );
}
